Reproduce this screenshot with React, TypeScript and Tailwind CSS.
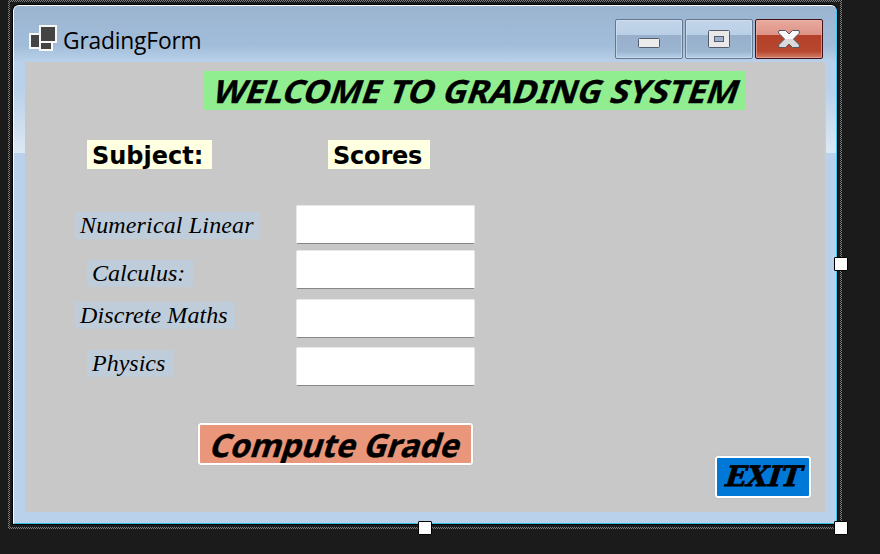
import type { ReactNode } from "react";

const checker =
  "bg-[repeating-conic-gradient(#7c7c7c_0_25%,#1b1b1b_0_50%)] bg-[length:2px_2px]";

function Caption({ close, children }: { close?: boolean; children: ReactNode }) {
  const tone = close
    ? "border-[#43101a] bg-[linear-gradient(#e9aaa0_0,#dd9285_40%,#b4402a_40%,#b8472f_82%,#d27d69_100%)] shadow-[inset_0_0_0_1px_#e9b5ac99]"
    : "border-[#66788f] bg-[linear-gradient(#c3d5e9_0,#b9cfe6_40%,#98b0cb_40%,#9bb4cf_82%,#b9d0e8_100%)] shadow-[inset_0_0_0_1px_#d5e4f399]";
  return (
    <button className={`flex h-10 w-[68px] items-center justify-center rounded-[2px] border ${tone}`}>
      {children}
    </button>
  );
}

function FormIcon() {
  return (
    <svg width="28" height="26" viewBox="0 0 28 26" shapeRendering="crispEdges">
      <path d="M0 8h10V0h18v18h-4v8H10v-2H0z" fill="#f8f8f8" />
      <path d="M2 10h8v12H2zM12 2h14v14H12zM12 18h10v6H12z" fill="#444" />
    </svg>
  );
}

const rows = [
  { text: "Numerical Linear", label: "mt-[7px] w-[185px] tracking-[0.15px]", gap: "mt-0" },
  { text: "Calculus:", label: "mt-[10px] ml-[12px] w-[106px]", gap: "mt-[6px]" },
  { text: "Discrete Maths", label: "mt-[4px] w-[160px] tracking-[0.1px]", gap: "mt-[10px]" },
  { text: "Physics", label: "mt-[10px] ml-[12px] w-[86px]", gap: "mt-[9px]" },
];

const handle = "absolute size-[14px] rounded-[1px] border border-black bg-white";

export default function App() {
  return (
    <div className="relative h-[554px] w-[880px] overflow-hidden bg-[#1b1b1b] pl-2 text-black">
      <div className={`h-[529px] w-[834px] p-[2px] ${checker}`}>
        <div className="h-[525px] w-[830px] bg-[#1b1b1b] pt-[2px] pl-[2px]">
          <div className="h-[521px] w-[826px] rounded-t-[7px] bg-black p-px">
            <div className="h-[519px] w-[824px] overflow-hidden rounded-t-[6px] border border-t-white border-r-[#35cdf5] border-b-[#3bbfd8] border-l-white bg-[#b9d1ea]">
              <header className="flex h-[56px] items-start bg-[linear-gradient(#9bb5d1_0,#a2bdd9_70%,#b9d1ea_100%)] pt-[13px] pr-[13px] pl-[15px]">
                <div className="mt-[6px]">
                  <FormIcon />
                </div>
                <span className="ml-[6px] flex-1 origin-left scale-x-[0.95] pt-[5px] font-['Open_Sans','Noto_Sans',sans-serif] text-[24px] leading-[32px] tracking-[-0.2px]">
                  GradingForm
                </span>
                <div className="flex gap-[2px]">
                  <Caption>
                    <svg width="22" height="22" viewBox="0 0 22 22" className="mt-[7px]">
                      <rect x="0.5" y="6.5" width="21" height="9" rx="1" fill="#ececec" stroke="#555c6e" />
                    </svg>
                  </Caption>
                  <Caption>
                    <svg width="22" height="18" viewBox="0 0 22 18">
                      <rect x="0.5" y="0.5" width="21" height="17" rx="1" fill="#e9e9e9" stroke="#555c6e" />
                      <rect x="6.5" y="6.5" width="9" height="5" fill="#9bb1cd" stroke="#555c6e" />
                    </svg>
                  </Caption>
                  <Caption close>
                    <svg width="22" height="18" viewBox="0 0 22 18">
                      <defs>
                        <linearGradient id="cross" x2="0" y2="1">
                          <stop offset="50%" stopColor="#fafafa" />
                          <stop offset="50%" stopColor="#d9d9d9" />
                        </linearGradient>
                      </defs>
                      <path
                        d="M1 .5H7.5L11 4 14.5.5H21L21.5 3 15.500 9 21.500 15 21 17.500H14.500L11 14 7.500 17.500H1L.5 15 6.500 9 .5 3z"
                        fill="url(#cross)"
                        stroke="#555565"
                      />
                    </svg>
                  </Caption>
                </div>
              </header>
              <div className="flex h-[450px]">
                <div className="h-[91px] w-[11px] bg-[linear-gradient(#b9d1ea_30%,#dce8f4)]" />
                <main className="h-[450px] w-[800px] bg-[#c8c8c8] pt-[9px]">
                  <h1 className="ml-[179px] flex h-[39px] w-[542px] items-center bg-[#90ee90] pl-[11px]">
                    <span className="origin-left scale-x-[1.048] -skew-x-[18deg] whitespace-nowrap font-['Noto_Sans',sans-serif] text-[32px] leading-[38px] font-bold [-webkit-text-stroke:0.3px_black]">
                      WELCOME TO GRADING SYSTEM
                    </span>
                  </h1>
                  <div className="mt-[30px] ml-[62px] flex gap-[116px] font-['DejaVu_Sans',sans-serif] text-[24px] leading-[29px] font-bold">
                    <div className="h-[29px] w-[125px] bg-[#ffffe1] pt-[2px] pl-[5px]">Subject:</div>
                    <div className="h-[29px] w-[102px] bg-[#ffffe1] pt-[2px] pl-[5px] tracking-[-0.2px]">Scores</div>
                  </div>
                  <div className="mt-[36px] ml-[50px] flex h-[181px]">
                    <div className="flex w-[221px] flex-col gap-[11px] font-['Liberation_Serif',serif] text-[24px] leading-[27px] italic">
                      {rows.map((r) => (
                        <label key={r.text} className={`h-[27px] shrink-0 whitespace-nowrap bg-[#bfcddb] pl-[5px] ${r.label}`}>
                          {r.text}
                        </label>
                      ))}
                    </div>
                    <div className="flex flex-col">
                      {rows.map((r) => (
                        <input
                          key={r.text}
                          aria-label={r.text}
                          className={`h-[39px] w-[179px] rounded-[2px] border border-[#e8e8e8] border-b-[#868686] bg-white ${r.gap}`}
                        />
                      ))}
                    </div>
                  </div>
                  <div className="mt-[37px] ml-[173px] flex items-start gap-[242px]">
                    <button className="flex h-[42px] w-[275px] items-center overflow-hidden rounded-[3px] border-2 border-white bg-[#e9967a] pt-[2px] pl-[12px] shadow-[0_0_1px_#999]">
                      <span className="origin-left -skew-x-[18deg] whitespace-nowrap font-['Noto_Sans',sans-serif] text-[32px] leading-[38px] font-bold [-webkit-text-stroke:0.4px_black]">
                        Compute Grade
                      </span>
                    </button>
                    <button className="mt-[33px] flex h-[42px] w-[96px] items-center rounded-[3px] border-2 border-white bg-[#0078d7] pl-[9px] shadow-[0_0_1px_#999]">
                      <span className="-skew-x-[6deg] font-['DejaVu_Serif',serif] text-[28px] leading-[38px] font-bold italic tracking-[-0.3px] [-webkit-text-stroke:0.8px_black]">
                        EXIT
                      </span>
                    </button>
                  </div>
                </main>
                <div className="ml-px h-[91px] w-[10px] bg-[linear-gradient(#b9d1ea_30%,#dce8f4)]" />
              </div>
            </div>
          </div>
        </div>
      </div>
      <i className={`${handle} top-[257px] left-[834px]`} />
      <i className={`${handle} top-[521px] left-[418px]`} />
      <i className={`${handle} top-[521px] left-[834px]`} />
    </div>
  );
}
